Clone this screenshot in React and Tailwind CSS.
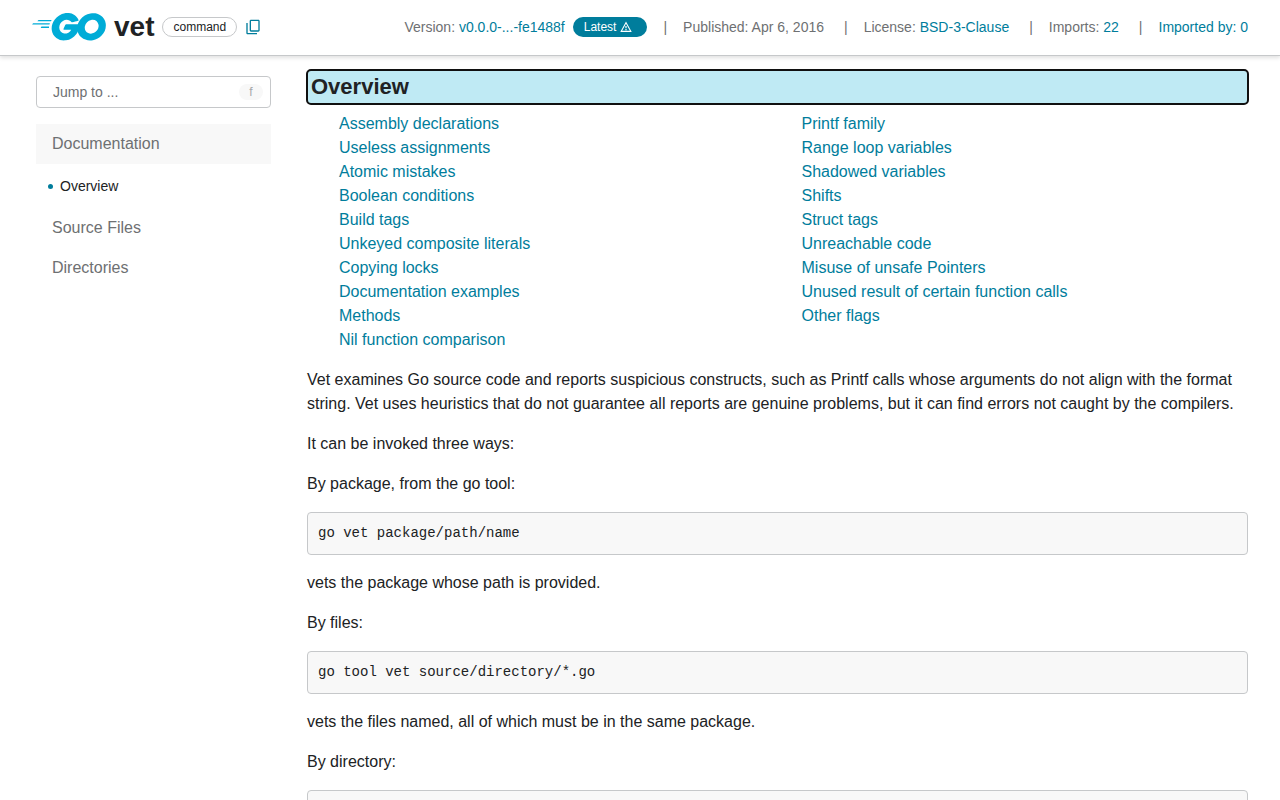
import React from "react";

const topics = [
  "Assembly declarations",
  "Useless assignments",
  "Atomic mistakes",
  "Boolean conditions",
  "Build tags",
  "Unkeyed composite literals",
  "Copying locks",
  "Documentation examples",
  "Methods",
  "Nil function comparison",
  "Printf family",
  "Range loop variables",
  "Shadowed variables",
  "Shifts",
  "Struct tags",
  "Unreachable code",
  "Misuse of unsafe Pointers",
  "Unused result of certain function calls",
  "Other flags",
];

function GoLogo() {
  return (
    <svg viewBox="24.5 78.5 206 77" className="h-7 w-[74px]" fill="#00acd7" role="img" aria-label="Go">
      <path d="M40.2,101.1c-0.4,0-0.5-0.2-0.3-0.5l2.1-2.7c0.2-0.3,0.7-0.5,1.1-0.5l35.7,0c0.4,0,0.5,0.3,0.3,0.6l-1.7,2.6c-0.2,0.3-0.7,0.6-1,0.6L40.2,101.1z" />
      <path d="M25.1,110.3c-0.4,0-0.5-0.2-0.3-0.5l2.1-2.7c0.2-0.3,0.7-0.5,1.1-0.5l45.6,0c0.4,0,0.6,0.3,0.5,0.6l-0.8,2.4c-0.1,0.4-0.5,0.6-0.9,0.6L25.1,110.3z" />
      <path d="M49.3,119.5c-0.4,0-0.5-0.3-0.3-0.6l1.4-2.5c0.2-0.3,0.6-0.6,1-0.6l20,0c0.4,0,0.6,0.3,0.6,0.7l-0.2,2.4c0,0.4-0.4,0.7-0.7,0.7L49.3,119.5z" />
      <path d="M153.1,99.3c-6.3,1.6-10.6,2.8-16.8,4.4c-1.5,0.4-1.6,0.5-2.9-1c-1.5-1.7-2.6-2.8-4.7-3.8c-6.3-3.1-12.4-2.2-18.1,1.5c-6.8,4.4-10.3,10.9-10.2,19c0.1,8,5.6,14.6,13.5,15.7c6.8,0.9,12.5-1.5,17-6.6c0.9-1.1,1.7-2.3,2.7-3.7c-3.6,0-8.1,0-19.3,0c-2.1,0-2.6-1.3-1.9-3c1.3-3.1,3.7-8.3,5.1-10.9c0.3-0.6,1-1.6,2.5-1.6c5.1,0,23.9,0,36.4,0c-0.2,2.7-0.2,5.4-0.6,8.1c-1.1,7.2-3.8,13.8-8.2,19.6c-7.2,9.5-16.6,15.4-28.5,17c-9.8,1.3-18.9-0.6-26.9-6.6c-7.4-5.6-11.6-13-12.7-22.2c-1.3-10.9,1.9-20.7,8.5-29.3c7.1-9.3,16.5-15.2,28-17.3c9.4-1.7,18.4-0.6,26.5,4.9c5.3,3.5,9.1,8.3,11.6,14.1C154.7,98.5,154.3,99,153.1,99.3z" />
      <path
        fillRule="evenodd"
        d="M186.2,154.6c-9.1-0.2-17.4-2.8-24.4-8.8c-5.9-5.1-9.6-11.6-10.8-19.3c-1.8-11.3,1.3-21.3,8.1-30.2c7.3-9.6,16.1-14.6,28-16.7c10.2-1.8,19.8-0.8,28.5,5.1c7.9,5.4,12.8,12.7,14.1,22.3c1.7,13.5-2.2,24.5-11.5,33.9c-6.6,6.7-14.7,10.9-24,12.8C191.5,154.2,188.8,154.3,186.2,154.6z M210,114.2c-0.1-1.3-0.1-2.3-0.3-3.3c-1.8-9.9-10.9-15.5-20.4-13.3c-9.3,2.1-15.3,8-17.5,17.4c-1.8,7.8,2,15.7,9.2,18.9c5.5,2.4,11,2.1,16.3-0.6C205.2,129.2,209.5,122.8,210,114.2z"
      />
    </svg>
  );
}

function Link({ children }) {
  return (
    <a href="#" className="text-[#007d9c] hover:underline">
      {children}
    </a>
  );
}

function Code({ children }) {
  return (
    <pre className="overflow-x-auto rounded-sm border border-[#c6c8ca] bg-[#f8f8f8] p-2.5 font-['Liberation_Mono',monospace] text-sm leading-[21px]">
      {children}
    </pre>
  );
}

function Separator() {
  return <span className="mr-4 ml-5">|</span>;
}

function Header() {
  return (
    <header className="sticky top-0 z-10 flex h-14 items-center justify-between border-b border-[#c6c8ca] bg-white px-8 pb-px shadow-[0_2px_4px_rgba(0,0,0,0.12)]">
      <div className="flex items-center">
        <a href="#" className="mr-2">
          <GoLogo />
        </a>
        <h1 className="mr-2 text-[28px] leading-8 font-bold">vet</h1>
        <span className="mr-2 rounded-full border border-[#c6c8ca] px-2.5 text-xs leading-[18px]">command</span>
        <button type="button" aria-label="Copy path to clipboard" className="text-[#007d9c]">
          <svg viewBox="0 0 24 24" className="size-4" fill="currentColor">
            <path d="M20 1H9c-1.100 0-2 .9-2 2v14c0 1.100.9 2 2 2h11c1.100 0 2-.9 2-2V3c0-1.100-.9-2-2-2zm0 16H9V3h11v14zM2 6v15c0 1.100.9 2 2 2h14v-2H4V6H2z" />
          </svg>
        </button>
      </div>
      <div className="flex items-center text-sm leading-5 text-[#6e7072]">
        <span>
          Version: <Link>v0.0.0-...-fe1488f</Link>
        </span>
        <span className="mr-4 ml-2 flex h-5 items-center gap-1 rounded-full bg-[#007d9c] pr-[15px] pl-[11px] text-xs text-white">
          Latest
          <svg viewBox="0 0 24 24" className="size-3" fill="currentColor" aria-hidden="true">
            <path d="M12 5.500 19.800 19.500H4.200L12 5.500M12 1 0.500 22h23L12 1zm1.200 15.200h-2.400v2.300h2.400v-2.300zm0-6.200h-2.400v4.600h2.400V10z" />
          </svg>
        </span>
        <span className="mr-4">|</span>
        <span>Published: Apr 6, 2016</span>
        <Separator />
        <span>
          License: <Link>BSD-3-Clause</Link>
        </span>
        <Separator />
        <span>
          Imports: <Link>22</Link>
        </span>
        <Separator />
        <Link>Imported by: 0</Link>
      </div>
    </header>
  );
}

function Sidebar() {
  return (
    <nav className="w-[235px] shrink-0 pt-5 text-base leading-6 text-[#6e7072]">
      <div className="mb-4 flex h-8 items-center rounded-sm border border-[#c6c8ca] pr-[7px] pl-4">
        <input
          type="text"
          aria-label="Jump to"
          placeholder="Jump to ..."
          className="min-w-0 flex-1 bg-transparent text-sm outline-none placeholder:text-[#6e7072]"
        />
        <kbd className="flex h-4 w-6 items-center justify-center rounded-full bg-[#f8f8f8] font-['Liberation_Sans',sans-serif] text-xs text-[#a5a7a9]">
          f
        </kbd>
      </div>
      <a href="#" className="block bg-[#f8f8f8] px-4 py-2">
        Documentation
      </a>
      <a href="#" className="flex h-11 items-center gap-[7px] pl-3 text-sm text-[#202224]">
        <span className="size-[5px] rounded-full bg-[#007d9c]" />
        Overview
      </a>
      <a href="#" className="block px-4 py-2">
        Source Files
      </a>
      <a href="#" className="block px-4 py-2">
        Directories
      </a>
    </nav>
  );
}

export default function App() {
  return (
    <div className="min-h-screen bg-white font-['Liberation_Sans',Arial,sans-serif] text-[#202224]">
      <Header />
      <div className="flex gap-9 pr-8 pl-9">
        <Sidebar />
        <main className="min-w-0 flex-1 pt-3.5 pb-4 text-base leading-6">
          <h2 className="rounded-sm bg-[#bfeaf4] px-1 text-[22px] leading-[34px] font-bold outline-2 -outline-offset-1 outline-[#101010]">
            Overview
          </h2>
          <ul className="mt-2 columns-2 gap-4 pl-8">
            {topics.map((topic) => (
              <li key={topic}>
                <Link>{topic}</Link>
              </li>
            ))}
          </ul>
          <div className="mt-4 flex flex-col gap-4">
            <p>
              Vet examines Go source code and reports suspicious constructs, such as Printf calls whose arguments do not
              align with the format string. Vet uses heuristics that do not guarantee all reports are genuine problems,
              but it can find errors not caught by the compilers.
            </p>
            <p>It can be invoked three ways:</p>
            <p>By package, from the go tool:</p>
            <Code>go vet package/path/name</Code>
            <p>vets the package whose path is provided.</p>
            <p>By files:</p>
            <Code>go tool vet source/directory/*.go</Code>
            <p>vets the files named, all of which must be in the same package.</p>
            <p>By directory:</p>
            <Code>go tool vet source/directory</Code>
          </div>
        </main>
      </div>
    </div>
  );
}
